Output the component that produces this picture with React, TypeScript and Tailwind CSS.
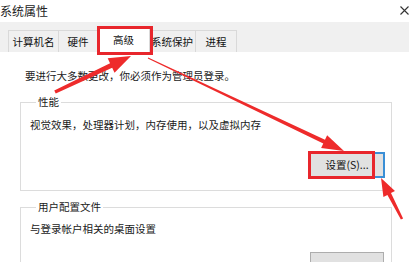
const cjk = { fontFamily: '"Microsoft YaHei", "Noto Sans CJK SC", sans-serif' };

type Pt = [number, number];

function arrowPoints(tail: Pt, tip: Pt, tailW: number, neckW: number, headLen: number, headW: number) {
  const dx = tip[0] - tail[0];
  const dy = tip[1] - tail[1];
  const len = Math.hypot(dx, dy);
  const ux = dx / len;
  const uy = dy / len;
  const nx = -uy;
  const ny = ux;
  const neck: Pt = [tip[0] - ux * headLen, tip[1] - uy * headLen];
  const pts: Pt[] = [
    [tail[0] + (nx * tailW) / 2, tail[1] + (ny * tailW) / 2],
    [neck[0] + (nx * neckW) / 2, neck[1] + (ny * neckW) / 2],
    [neck[0] + (nx * headW) / 2, neck[1] + (ny * headW) / 2],
    tip,
    [neck[0] - (nx * headW) / 2, neck[1] - (ny * headW) / 2],
    [neck[0] - (nx * neckW) / 2, neck[1] - (ny * neckW) / 2],
    [tail[0] - (nx * tailW) / 2, tail[1] - (ny * tailW) / 2],
  ];
  return pts.map((p) => p.join(",")).join(" ");
}

export default function App() {
  return (
    <div className="relative w-[420px] h-[280px] bg-white overflow-hidden" style={cjk}>
      <div className="w-[409px] h-[262px] overflow-hidden">
        <div className="h-[22px] flex items-center justify-between">
          <span className="text-[12px] text-[#222]">系统属性</span>
          <svg width="9" height="9" viewBox="0 0 9 9" className="mb-[2px]">
            <path d="M0.5 0.5 L8.5 8.5 M8.5 0.5 L0.5 8.5" stroke="#333" strokeWidth="1.1" />
          </svg>
        </div>
        <div className="h-[30px] bg-[#f0f0f0] flex items-end pl-[8px]">
          <div className="flex items-end text-[10.5px] text-[#111]">
            <div className="w-[51px] h-[22px] bg-[#f0f0f0] border border-b-0 border-[#d9d9d9] flex items-center justify-center">
              计算机名
            </div>
            <div className="w-[40px] h-[22px] -ml-[1px] bg-[#f0f0f0] border border-b-0 border-[#d9d9d9] flex items-center justify-center">
              硬件
            </div>
            <div className="relative w-[53px] h-[25px] -ml-[1px] bg-white border border-b-0 border-[#d9d9d9] flex items-center justify-center">
              高级
              <span className="absolute -left-[1px] -right-[4px] -top-[2px] -bottom-[3px] border-[3px] border-[#e8262c]"></span>
            </div>
            <div className="w-[47px] h-[22px] -ml-[1px] bg-[#f0f0f0] border border-b-0 border-[#d9d9d9] flex items-center justify-end pr-[2px]">
              系统保护
            </div>
            <div className="w-[42px] h-[22px] -ml-[1px] bg-[#f0f0f0] border border-b-0 border-[#d9d9d9] flex items-center justify-center">
              进程
            </div>
          </div>
        </div>
        <div className="pl-[20px] pr-[17px]">
          <p className="mt-[17px] ml-[5px] text-[10.5px] leading-[14px] text-[#1a1a1a]">
            要进行大多数更改，你必须作为管理员登录。
          </p>
          <fieldset className="mt-[12px] h-[96px] border border-[#dcdcdc] px-[9px]">
            <legend className="ml-[6px] px-[2px] text-[10.5px] leading-[14px] text-[#1a1a1a]">性能</legend>
            <p className="mt-[9px] text-[10.5px] leading-[14px] text-[#1a1a1a]">
              视觉效果，处理器计划，内存使用，以及虚拟内存
            </p>
            <div className="flex justify-end mt-[20px] -mr-[3px]">
              <div className="relative w-[76px] h-[26px] bg-[#e1e1e1] border-2 border-[#3a8fd6] flex items-center justify-center text-[10.5px] text-[#111]">
                设置(S)...
                <span className="absolute -left-[3px] -top-[3px] -bottom-[3px] w-[67px] border-[3px] border-[#e8262c]"></span>
              </div>
            </div>
          </fieldset>
          <fieldset className="mt-[9px] h-[80px] border border-[#dcdcdc] px-[9px]">
            <legend className="ml-[6px] px-[2px] text-[10.5px] leading-[14px] text-[#1a1a1a]">用户配置文件</legend>
            <p className="mt-[8px] text-[10.5px] leading-[14px] text-[#1a1a1a]">与登录帐户相关的桌面设置</p>
            <div className="flex justify-end mt-[16px] -mr-[2px]">
              <div className="w-[74px] h-[24px] bg-[#e1e1e1] border border-[#adadad]"></div>
            </div>
          </fieldset>
        </div>
      </div>
      <svg className="absolute inset-0 pointer-events-none" width="420" height="280" viewBox="0 0 420 280">
        <polygon points={arrowPoints([55, 92], [131, 56], 3.5, 5, 22, 16)} fill="#ee2b2b" />
        <polygon points={arrowPoints([148, 58], [344, 151], 1, 4, 22, 14)} fill="#ee2b2b" />
        <polygon points={arrowPoints([402, 219], [381, 178], 2.5, 4, 18, 13)} fill="#ee2b2b" />
      </svg>
    </div>
  );
}
